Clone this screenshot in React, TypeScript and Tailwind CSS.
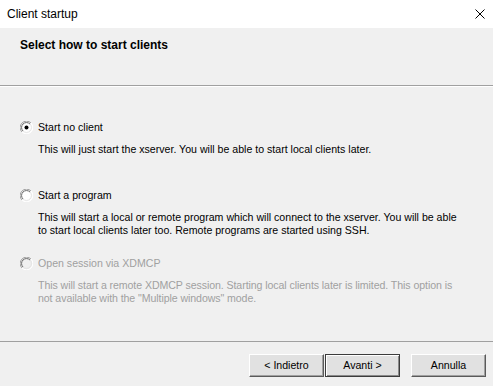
import React from "react";

const font = { fontFamily: '"Liberation Sans", Arial, sans-serif' };

const Radio = ({ checked, disabled }: { checked?: boolean; disabled?: boolean }) => (
  <svg width="13" height="13" viewBox="0 0 13 13" className="shrink-0">
    <circle cx="6.5" cy="6.5" r="6" fill={disabled ? "#f0f0f0" : "#ffffff"} />
    <path d="M11 2 A6 6 0 0 0 2 11" fill="none" stroke="#a0a0a0" strokeWidth="1" />
    <path d="M10 3 A4.6 4.6 0 0 0 3 10" fill="none" stroke="#696969" strokeWidth="1" />
    <path d="M2 11 A6 6 0 0 0 11 2" fill="none" stroke="#ffffff" strokeWidth="1" />
    <path d="M3 10 A4.6 4.6 0 0 0 10 3" fill="none" stroke="#e3e3e3" strokeWidth="1" />
    {checked && <circle cx="6.5" cy="6.5" r="2" fill="#000" />}
  </svg>
);

type OptionProps = {
  label: string;
  lines: string[];
  checked?: boolean;
  disabled?: boolean;
  className?: string;
};

const Option = ({ label, lines, checked, disabled, className }: OptionProps) => (
  <div className={className}>
    <div className="flex items-center gap-[5px] h-[13px] pl-5">
      <Radio checked={checked} disabled={disabled} />
      <span className={disabled ? "text-[#a0a0a0]" : "text-black"}>{label}</span>
    </div>
    <div
      className={`pl-[38px] mt-[9px] ${disabled ? "text-[#a0a0a0] tracking-[-0.08px]" : "text-black"}`}
    >
      {lines.map((l, i) => (
        <div key={i} className="h-[13px] whitespace-nowrap">{l}</div>
      ))}
    </div>
  </div>
);

const WinButton = ({ children, isDefault }: { children: React.ReactNode; isDefault?: boolean }) => (
  <div
    className={`w-[75px] h-[23px] flex items-center justify-center bg-[#e1e1e1] text-black ${
      isDefault
        ? "border border-[#3c3c3c] shadow-[inset_1px_1px_0_#ffffff,inset_-1px_-1px_0_#8a8a8a]"
        : "border-t border-l border-[#ffffff] border-r-[#5a5a5a] border-b-[#5a5a5a] border-r border-b shadow-[inset_-1px_-1px_0_#a0a0a0]"
    }`}
  >
    {children}
  </div>
);

export default function App() {
  return (
    <div className="w-[493px] h-[386px] bg-[#f0f0f0] flex flex-col text-[10.6px] leading-[13px]" style={font}>
      <div className="h-[28px] bg-white flex items-center justify-between pl-[7px] pr-[7px]">
        <span className="text-[12px] text-black">Client startup</span>
        <svg width="10" height="10" viewBox="0 0 10 10" className="mr-[1px]">
          <path d="M0.5 0.5 L9.5 9.5 M9.5 0.5 L0.5 9.5" stroke="#000" strokeWidth="1" />
        </svg>
      </div>
      <div className="h-[58px] pl-5 pt-[11px] border-b border-[#a0a0a0]">
        <span className="font-bold text-[12px] text-black">Select how to start clients</span>
      </div>
      <div className="h-px bg-white" />
      <Option
        className="mt-[34px]"
        checked
        label="Start no client"
        lines={["This will just start the xserver. You will be able to start local clients later."]}
      />
      <Option
        className="mt-[33px]"
        label="Start a program"
        lines={[
          "This will start a local or remote program which will connect to the xserver. You will be able",
          "to start local clients later too. Remote programs are started using SSH.",
        ]}
      />
      <Option
        className="mt-[20px]"
        disabled
        label="Open session via XDMCP"
        lines={[
          "This will start a remote XDMCP session. Starting local clients later is limited. This option is",
          "not available with the \"Multiple windows\" mode.",
        ]}
      />
      <div className="flex-1" />
      <div className="border-t border-[#a0a0a0] h-px bg-white" />
      <div className="h-[44px] flex items-start pt-[12px] pr-[7px] justify-end">
        <WinButton>&lt; Indietro</WinButton>
        <div className="w-[1px]" />
        <WinButton isDefault>Avanti &gt;</WinButton>
        <div className="w-[11px]" />
        <WinButton>Annulla</WinButton>
      </div>
    </div>
  );
}
